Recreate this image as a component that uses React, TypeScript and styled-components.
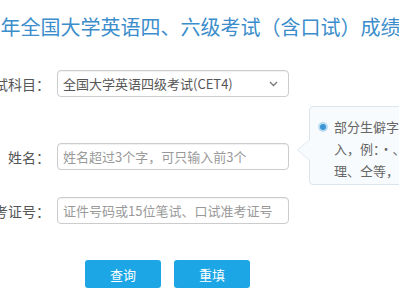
import React from 'react'
import styled, { createGlobalStyle } from 'styled-components'

const GlobalStyle = createGlobalStyle`
	html, body {
		margin: 0;
		padding: 0;
		background: #fff;
		overflow: hidden;
	}
	body {
		font-family: "Noto Sans CJK SC", "Noto Sans", sans-serif;
		width: 399px;
		height: 300px;
	}
`

const Page = styled.div`
	width: 399px;
	height: 300px;
	overflow: hidden;
	position: relative;
`

const Title = styled.h1`
	margin: 0;
	padding-top: 13px;
	margin-left: -44px;
	white-space: nowrap;
	font-size: 20px;
	line-height: 28px;
	font-weight: 400;
	color: #3b8dcb;
`

const Form = styled.form`
	margin-left: -22px;
	margin-top: 29px;
	display: flex;
	flex-direction: column;
`

const Row = styled.div<{ $gap: number }>`
	position: relative;
	display: grid;
	grid-template-columns: 72px 232px;
	column-gap: 7px;
	align-items: center;
	margin-top: ${p => p.$gap}px;
`

const Label = styled.label`
	text-align: right;
	white-space: nowrap;
	font-size: 14px;
	color: #555;
`

const Field = styled.div`
	position: relative;
	height: 27px;
	box-sizing: border-box;
	border: 1px solid #ccc;
	border-radius: 4px;
	box-shadow: inset 0 1px 1px rgba(0, 0, 0, 0.06);
	background: #fff;
	display: flex;
	align-items: center;
	padding: 0 10px 0 5px;
	font-size: 13px;
`

const Value = styled.span`
	color: #555;
	flex: 1;
	white-space: nowrap;
`

const Placeholder = styled.span`
	color: #999;
	white-space: nowrap;
`

const Popover = styled.div`
	position: absolute;
	left: 331px;
	top: -37px;
	width: 270px;
	height: 79px;
	box-sizing: border-box;
	background: #f8fbfd;
	border: 1px solid #dce4ec;
	border-radius: 4px;
	padding: 9px 0 0 8px;
	display: flex;
	align-items: flex-start;
	gap: 6px;

	&::before,
	&::after {
		content: '';
		position: absolute;
		top: 32px;
		border-style: solid;
		border-color: transparent;
	}
	&::before {
		left: -13px;
		border-width: 11px 13px 11px 0;
		border-right-color: #dce4ec;
	}
	&::after {
		left: -12px;
		border-width: 11px 13px 11px 0;
		border-right-color: #f8fbfd;
	}
`

const Radio = styled.span`
	flex: none;
	margin-top: 6px;
	width: 10px;
	height: 10px;
	border-radius: 50%;
	box-sizing: border-box;
	border: 2px solid #b9dcf2;
	background: #3d95d3;
`

const Note = styled.p`
	margin: 0;
	font-size: 13px;
	line-height: 22px;
	color: #666;
	white-space: nowrap;
`

const Link = styled.span`
	color: #2a8ad6;
`

const ButtonBar = styled.div`
	margin-top: 36px;
	padding-left: 107px;
	display: flex;
	gap: 13px;
`

const Button = styled.button`
	width: 76px;
	height: 28px;
	border: none;
	border-radius: 3px;
	background: #1ca6e6;
	color: #fff;
	font-family: inherit;
	font-size: 13px;
	padding: 0;
`

export default function App() {
	return (
		<Page>
			<GlobalStyle />
			<Title>2021年全国大学英语四、六级考试（含口试）成绩查询</Title>
			<Form>
				<Row $gap={0}>
					<Label>考试科目：</Label>
					<Field>
						<Value>全国大学英语四级考试(CET4)</Value>
						<svg width="9" height="6" viewBox="0 0 9 6">
							<path d="M1 1l3.5 3.5L8 1" fill="none" stroke="#777" strokeWidth="1.3" />
						</svg>
					</Field>
				</Row>
				<Row $gap={46}>
					<Label>姓名：</Label>
					<Field>
						<Placeholder>姓名超过3个字，可只输入前3个</Placeholder>
					</Field>
					<Popover>
						<Radio />
						<Note>
							部分生僻字可用拼音代替输<br />
							入，例：·、吕、喆、堃、<br />
							理、仝等，<Link>点此查看</Link>
						</Note>
					</Popover>
				</Row>
				<Row $gap={27}>
					<Label>准考证号：</Label>
					<Field>
						<Placeholder>证件号码或15位笔试、口试准考证号</Placeholder>
					</Field>
				</Row>
				<ButtonBar>
					<Button type="button">查询</Button>
					<Button type="button">重填</Button>
				</ButtonBar>
			</Form>
		</Page>
	)
}
